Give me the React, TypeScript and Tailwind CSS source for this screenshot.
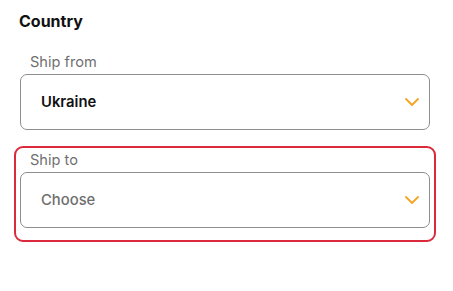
import { ReactNode } from "react";

function Chevron() {
  return (
    <svg width="14" height="8" viewBox="0 0 14 8" fill="none" className="shrink-0">
      <path d="M1 1l6 6 6-6" stroke="#f5a524" strokeWidth="1.8" strokeLinecap="round" strokeLinejoin="round" />
    </svg>
  );
}

function SelectField({ label, value, placeholder }: { label: string; value?: string; placeholder?: string }) {
  return (
    <div>
      <div className="pl-[10px] text-[14.6px] leading-5 text-[#6f6f6f]">{label}</div>
      <div className="mt-[2px] flex h-[56px] items-center justify-between rounded-[7px] border border-[#8e8e8e] bg-white pl-5 pr-[10px]">
        {value ? (
          <span className="text-[14.8px] font-semibold text-[#111]">{value}</span>
        ) : (
          <span className="text-[14.8px] font-medium text-[#6e6e6e]">{placeholder}</span>
        )}
        <Chevron />
      </div>
    </div>
  );
}

function Group({ children, error }: { children: ReactNode; error?: boolean }) {
  return (
    <div
      className={
        error
          ? "rounded-[9px] border-2 border-[#da2a3b] px-1 pt-[2px] pb-3"
          : "border-2 border-transparent px-1 pt-[2px]"
      }
    >
      {children}
    </div>
  );
}

export default function App() {
  return (
    <div className="min-h-[291px] w-full bg-white pl-[14px] pr-[17px] pt-[9px] font-['Inter',sans-serif]">
      <h2 className="pl-[5px] text-[16px] font-bold leading-6 text-[#111]">Country</h2>

      <div className="mt-[15px]">
        <Group>
          <SelectField label="Ship from" value="Ukraine" />
        </Group>
      </div>

      <div className="mt-[14px]">
        <Group error>
          <SelectField label="Ship to" placeholder="Choose" />
        </Group>
      </div>
    </div>
  );
}
